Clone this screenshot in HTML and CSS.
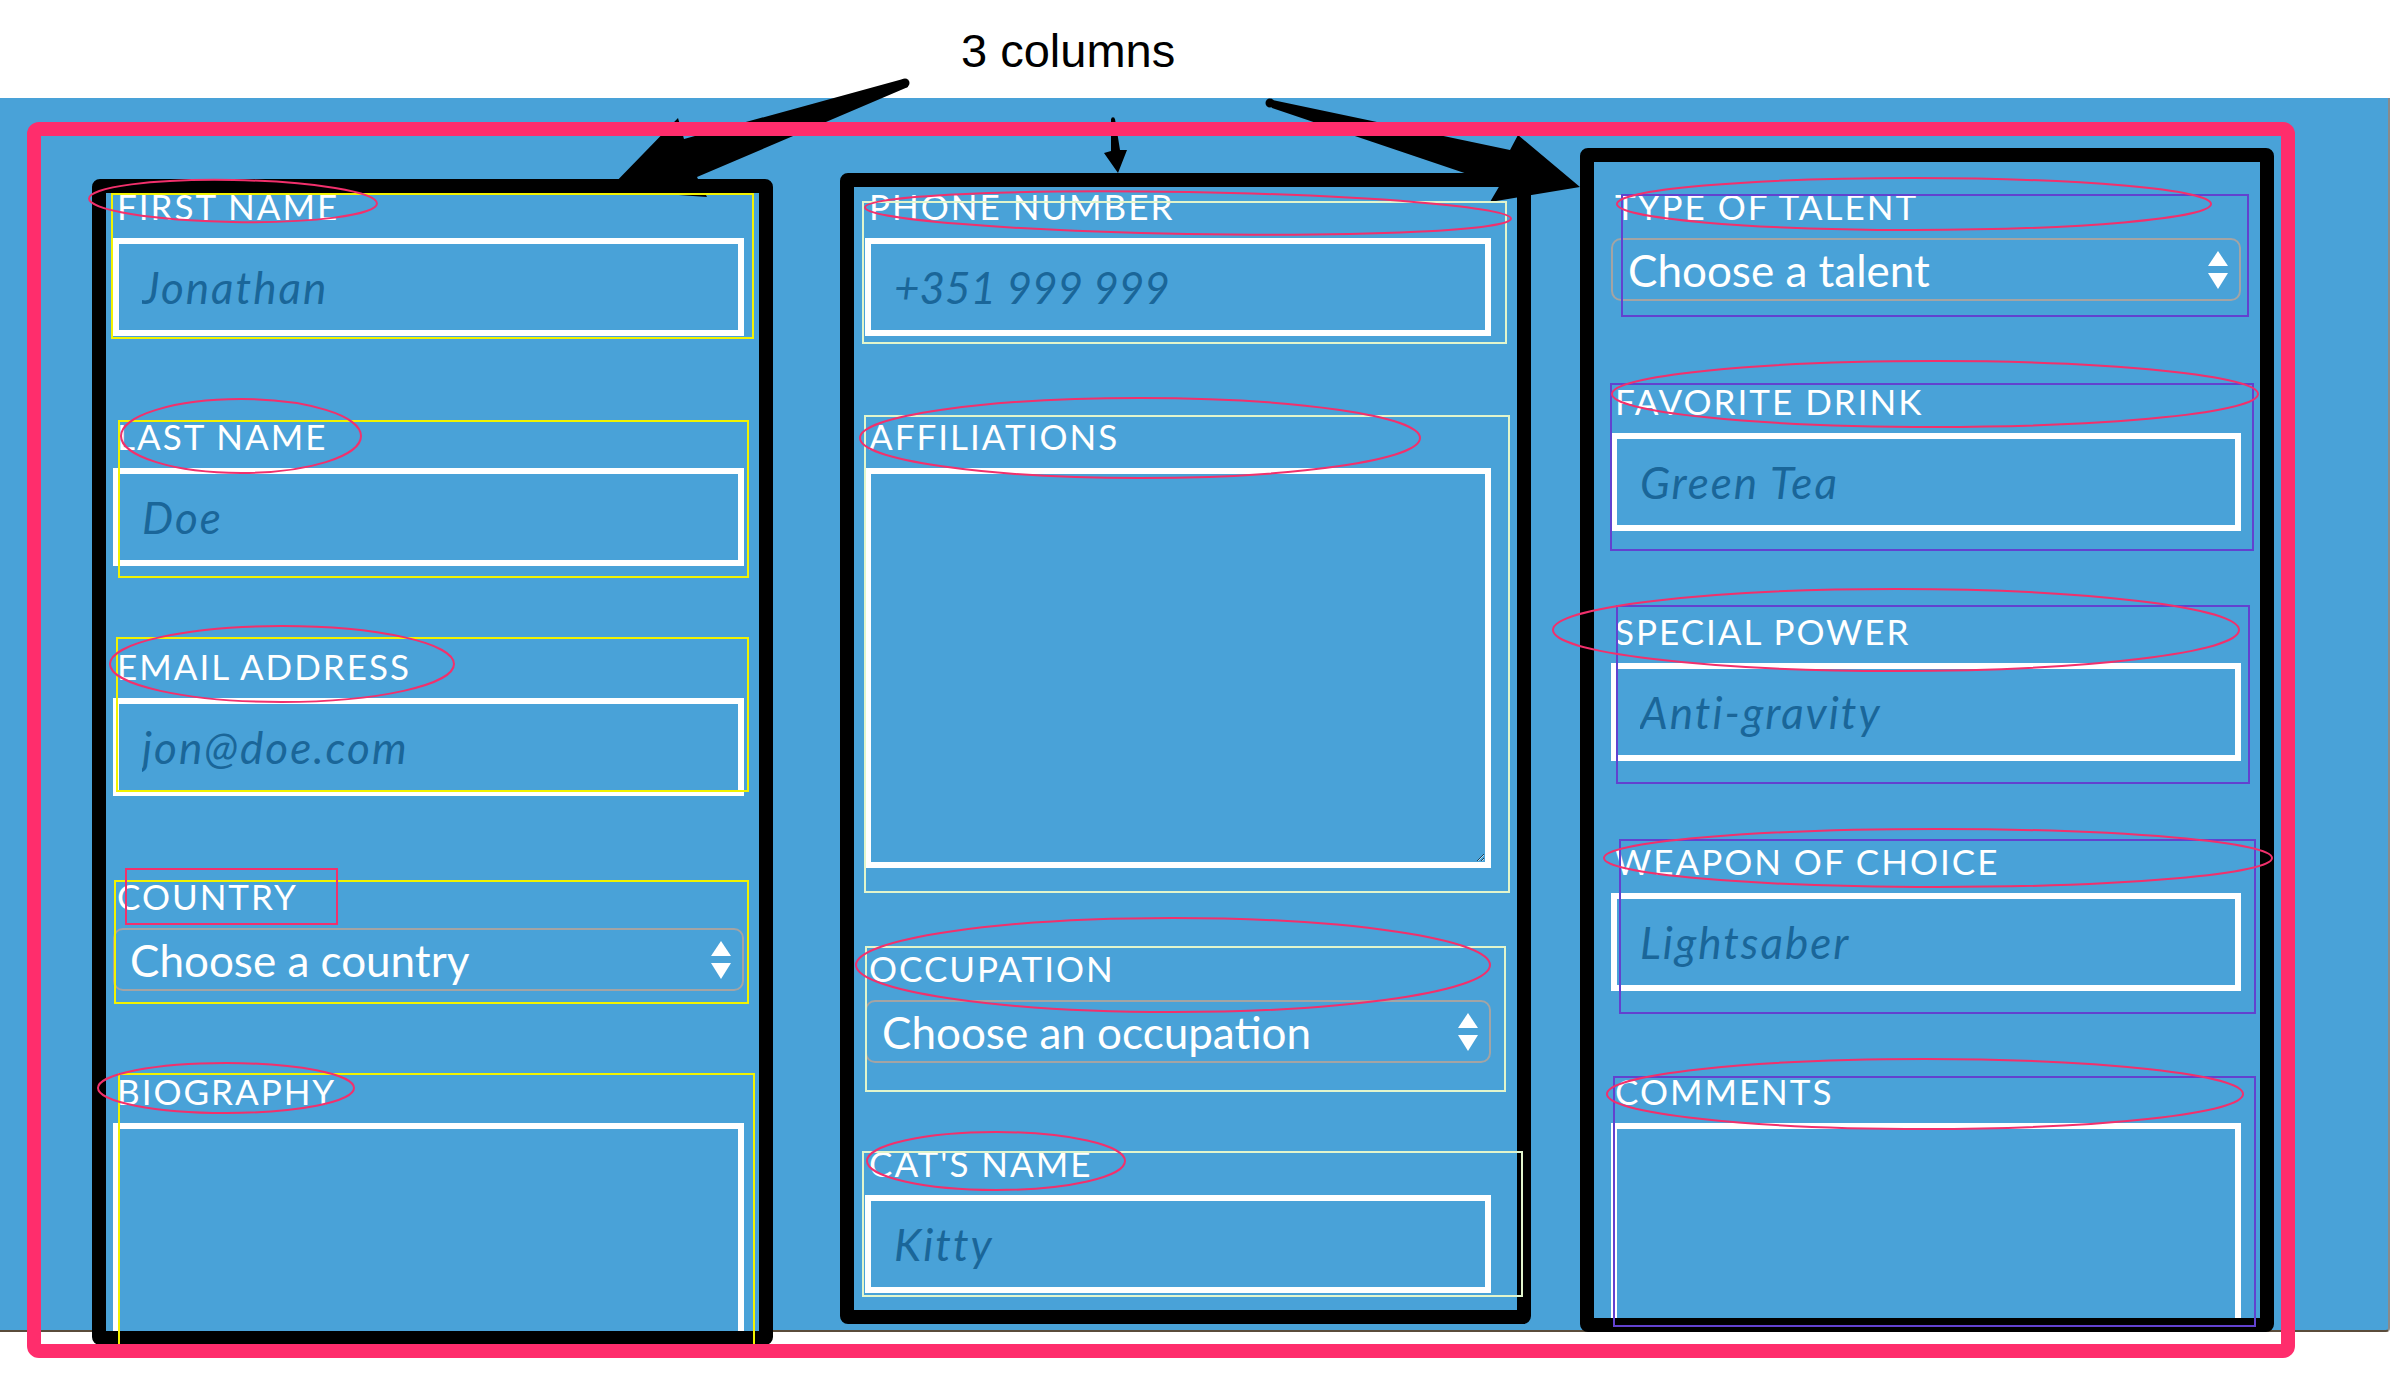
FILE: index.html
```html
<!DOCTYPE html>
<html lang="en">
<head>
    <meta charset="UTF-8">
    <meta name="viewport" content="width=device-width, initial-scale=1.0">
    <title>Signup form - 3 columns</title>
    <link rel="stylesheet" href="styles.css">
</head>
<body>
    <header class="caption">3 columns</header>

    <main class="stage">
        <!-- Column 1 -->
        <section class="column column-one">
            <div class="field">
                <label for="first-name">First name</label>
                <input type="text" id="first-name" placeholder="Jonathan">
            </div>
            <div class="field">
                <label for="last-name">Last name</label>
                <input type="text" id="last-name" placeholder="Doe">
            </div>
            <div class="field">
                <label for="email">Email address</label>
                <input type="email" id="email" placeholder="jon@doe.com">
            </div>
            <div class="field">
                <label for="country">Country</label>
                <div class="select">
                    <select id="country">
                        <option>Choose a country</option>
                    </select>
                    <svg class="select-arrows" viewBox="0 0 20 38" width="20" height="38">
                        <polygon points="10,0 20,15 0,15" />
                        <polygon points="0,22 20,22 10,38" />
                    </svg>
                </div>
            </div>
            <div class="field">
                <label for="biography">Biography</label>
                <textarea id="biography" class="tall"></textarea>
            </div>
        </section>

        <!-- Column 2 -->
        <section class="column column-two">
            <div class="field">
                <label for="phone">Phone number</label>
                <input type="tel" id="phone" class="numeric" placeholder="+351 999 999">
            </div>
            <div class="field">
                <label for="affiliations">Affiliations</label>
                <textarea id="affiliations"></textarea>
            </div>
            <div class="field">
                <label for="occupation">Occupation</label>
                <div class="select">
                    <select id="occupation">
                        <option>Choose an occupation</option>
                    </select>
                    <svg class="select-arrows" viewBox="0 0 20 38" width="20" height="38">
                        <polygon points="10,0 20,15 0,15" />
                        <polygon points="0,22 20,22 10,38" />
                    </svg>
                </div>
            </div>
            <div class="field">
                <label for="cat-name">Cat's name</label>
                <input type="text" id="cat-name" placeholder="Kitty">
            </div>
        </section>

        <!-- Column 3 -->
        <section class="column column-three">
            <div class="field">
                <label for="talent">Type of talent</label>
                <div class="select">
                    <select id="talent">
                        <option>Choose a talent</option>
                    </select>
                    <svg class="select-arrows" viewBox="0 0 20 38" width="20" height="38">
                        <polygon points="10,0 20,15 0,15" />
                        <polygon points="0,22 20,22 10,38" />
                    </svg>
                </div>
            </div>
            <div class="field">
                <label for="drink">Favorite drink</label>
                <input type="text" id="drink" placeholder="Green Tea">
            </div>
            <div class="field">
                <label for="power">Special power</label>
                <input type="text" id="power" placeholder="Anti-gravity">
            </div>
            <div class="field">
                <label for="weapon">Weapon of choice</label>
                <input type="text" id="weapon" placeholder="Lightsaber">
            </div>
            <div class="field">
                <label for="comments">Comments</label>
                <textarea id="comments" class="tall"></textarea>
            </div>
        </section>
    </main>

    <!-- Review markup drawn over the screenshot -->
    <svg class="markup" viewBox="0 0 2392 1400" width="2392" height="1400">
        <g class="arrows">
            <circle cx="905" cy="83" r="4.5" />
            <polygon points="903,79 684,139 678,118 608,190 707,197 697,177 908,87" />
            <circle cx="1113" cy="119" r="1.8" />
            <polygon points="1111,119 1115,119 1120,150 1127,150 1118,173 1104,153 1111,151" />
            <circle cx="1270" cy="103" r="4.5" />
            <polygon points="1268,99 1510,150 1518,135 1580,187 1490,202 1500,185 1272,108" />
        </g>

        <g class="boxes-yellow">
            <rect x="112" y="194" width="641" height="144" />
            <rect x="119" y="421" width="629" height="156" />
            <rect x="117" y="638" width="631" height="153" />
            <rect x="115" y="881" width="633" height="122" />
            <rect x="119" y="1074" width="635" height="272" />
        </g>

        <g class="boxes-green">
            <rect x="863" y="202" width="643" height="141" />
            <rect x="865" y="416" width="644" height="476" />
            <rect x="866" y="947" width="639" height="144" />
            <rect x="863" y="1152" width="659" height="144" />
        </g>

        <g class="boxes-purple">
            <rect x="1622" y="195" width="626" height="121" />
            <rect x="1611" y="384" width="642" height="166" />
            <rect x="1617" y="606" width="632" height="177" />
            <rect x="1620" y="840" width="635" height="173" />
            <rect x="1614" y="1077" width="641" height="249" />
        </g>

        <g class="rings">
            <ellipse cx="233" cy="201" rx="144" ry="21" transform="rotate(1 233 201)" />
            <ellipse cx="241" cy="436" rx="120" ry="37" />
            <ellipse cx="282" cy="664" rx="172" ry="38" />
            <rect x="126" y="869" width="211" height="55" />
            <ellipse cx="226" cy="1088" rx="128" ry="25" />

            <ellipse cx="1188" cy="213" rx="323" ry="21" transform="rotate(1 1188 213)" />
            <ellipse cx="1140" cy="438" rx="280" ry="40" />
            <ellipse cx="1173" cy="965" rx="317" ry="47" />
            <ellipse cx="996" cy="1161" rx="129" ry="29" />

            <ellipse cx="1914" cy="204" rx="297" ry="26" />
            <ellipse cx="1935" cy="394" rx="323" ry="33" />
            <ellipse cx="1896" cy="630" rx="343" ry="41" />
            <ellipse cx="1938" cy="858" rx="334" ry="29" />
            <ellipse cx="1925" cy="1094" rx="318" ry="35" />
        </g>

        <rect class="frame" x="34" y="129" width="2254" height="1222" rx="5" />
    </svg>
</body>
</html>
```

FILE: styles.css
```css
body {
    margin: 0;
    position: relative;
    width: 2392px;
    height: 1400px;
    overflow: hidden;
    background-color: #fff;
    font-family: Lato, "Open Sans", sans-serif;
}

.caption {
    box-sizing: border-box;
    height: 98px;
    padding: 25px 0 0 961px;
    font-family: "Liberation Sans", Arial, sans-serif;
    font-size: 47px;
    line-height: 52px;
    color: #000;
}

.stage {
    display: flex;
    align-items: flex-start;
    box-sizing: border-box;
    width: 2390px;
    height: 1234px;
    padding-left: 92px;
    background-color: #49a2d8;
    border-right: 2px solid #8a8a8a;
    border-bottom: 2px solid #5a4c3b;
    border-bottom-right-radius: 4px;
}

.column {
    box-sizing: border-box;
    flex-shrink: 0;
    border: 14px solid #000;
    border-radius: 8px;
    background-color: #49a2d8;
    overflow: hidden;
}

.column-one {
    width: 681px;
    height: 1166px;
    margin-top: 81px;
    padding: 0 15px 0 7px;
}

.column-two {
    width: 691px;
    height: 1151px;
    margin-top: 75px;
    margin-left: 67px;
    padding: 6px 26px 0 11px;
}

.column-three {
    width: 694px;
    height: 1184px;
    margin-top: 50px;
    margin-left: 49px;
    padding: 31px 19px 0 17px;
}

.field {
    margin-bottom: 87px;
}

.field label {
    display: block;
    margin-bottom: 18px;
    padding-left: 4px;
    font-size: 35px;
    line-height: 27px;
    color: #fff;
    text-transform: uppercase;
    letter-spacing: 2px;
}

.field input,
.field textarea {
    display: block;
    box-sizing: border-box;
    width: 100%;
    margin: 0;
    border: 6px solid #fff;
    border-radius: 0;
    background: transparent;
    font-family: Lato, "Open Sans", sans-serif;
    font-size: 44px;
    font-style: italic;
    color: #1a6699;
    outline: none;
}

.field input {
    height: 98px;
    padding: 0 20px 0 23px;
}

.field input::placeholder {
    color: #1a6699;
    opacity: 1;
    letter-spacing: 2px;
}

.field input.numeric::placeholder {
    letter-spacing: 0;
}

.field textarea {
    height: 400px;
    padding: 14px 20px;
}

.field textarea.tall {
    height: 420px;
}

.select {
    display: flex;
    align-items: center;
    box-sizing: border-box;
    height: 63px;
    padding: 0 11px 0 15px;
    border: 2px solid #a4a4a4;
    border-radius: 10px;
}

.select select {
    flex: 1;
    min-width: 0;
    padding: 0;
    border: none;
    background: transparent;
    -webkit-appearance: none;
    appearance: none;
    font-family: Lato, "Open Sans", sans-serif;
    font-size: 44px;
    color: #fff;
    outline: none;
}

.select-arrows {
    flex-shrink: 0;
    fill: #fff;
}

.markup {
    position: absolute;
    top: 0;
    left: 0;
    pointer-events: none;
}

.arrows {
    fill: #000;
}

.boxes-yellow rect {
    fill: none;
    stroke: #f2f200;
    stroke-width: 2;
}

.boxes-green rect {
    fill: none;
    stroke: #e2f5cc;
    stroke-width: 2;
}

.boxes-purple rect {
    fill: none;
    stroke: #6242cf;
    stroke-width: 2;
}

.rings ellipse,
.rings rect {
    fill: none;
    stroke: #f2306c;
    stroke-width: 2;
}

.frame {
    fill: none;
    stroke: #ff2d6c;
    stroke-width: 14;
}
```
